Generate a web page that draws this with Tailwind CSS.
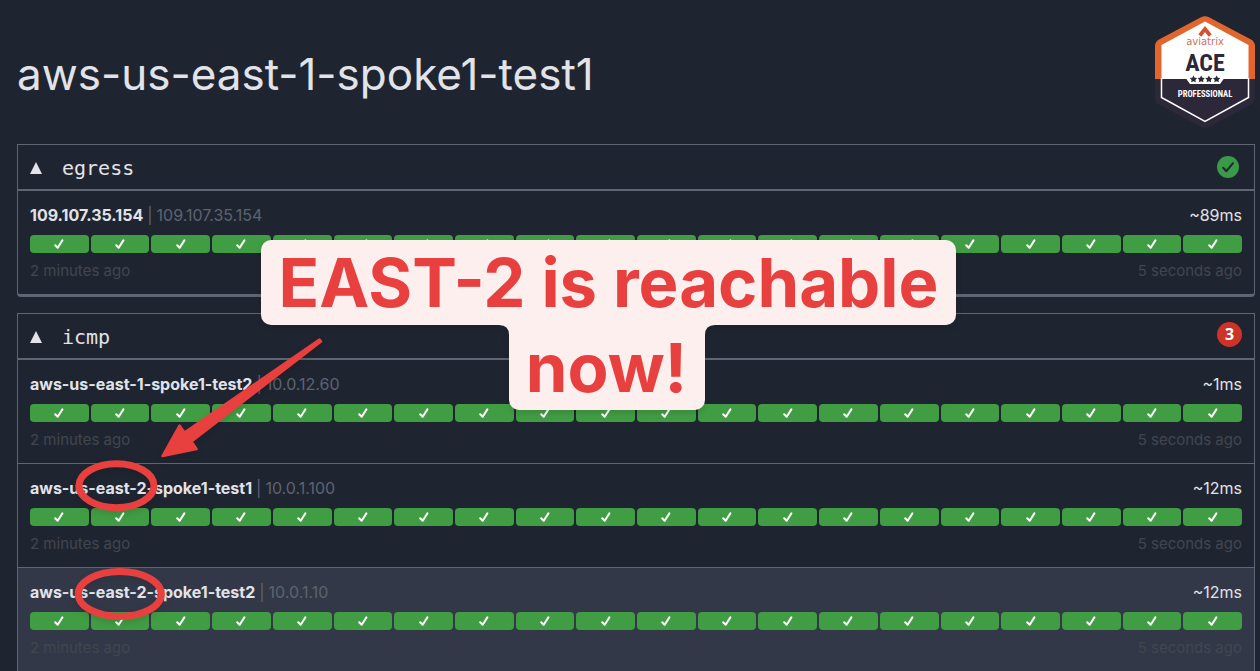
<!DOCTYPE html>
<html lang="en">
<head>
<meta charset="utf-8">
<meta name="viewport" content="width=device-width, initial-scale=1">
<title>aws-us-east-1-spoke1-test1</title>
<script src="https://cdn.jsdelivr.net/npm/@tailwindcss/browser@4"></script>
</head>
<body class="bg-[#1f2530] font-['Inter',sans-serif] text-base text-[#e2e3e9]">
<svg class="hidden" aria-hidden="true">
  <symbol id="tick" viewBox="0 0 12 12"><path d="M2.2 7.200 4.700 9.800 9.400 2.400" fill="none" stroke="#fff" stroke-width="2" stroke-linecap="round" stroke-linejoin="round"/></symbol>
</svg>
<main class="relative overflow-hidden pr-[5px] pl-[17px]">
  <header class="flex h-36 items-center justify-between">
    <h1 class="pt-1 text-[44px] leading-12">aws-us-east-1-spoke1-test1</h1>
    <svg class="h-[114px] w-[100px]" viewBox="0 0 100 114" role="img" aria-label="Aviatrix ACE Professional">
      <defs>
        <clipPath id="upper"><rect width="100" height="64"/></clipPath>
        <clipPath id="lower"><rect y="64" width="100" height="50"/></clipPath>
        <path id="hex" d="M46 2.3Q50 0 54 2.3L96 24.500Q100 27 100 31V83Q100 87 96 89.500L54 111.700Q50 114 46 111.700L4 89.500Q0 87 0 83V31Q0 27 4 24.500Z"/>
      </defs>
      <use href="#hex" fill="#e2652e" clip-path="url(#upper)"/>
      <use href="#hex" fill="#2c2839" clip-path="url(#lower)"/>
      <path d="M50 6.500 93.500 30V83L50 107.500 6.500 83V30Z" fill="#fff" clip-path="url(#upper)"/>
      <path d="M6.500 63V82.500L50 106.500 93.500 82.500V63" fill="none" stroke="#fff" stroke-width="1.500"/>
      <path d="M31 63.500 35 69H65L69 63.500Z" fill="#fff"/>
      <path d="M44.800 20.500 50 14 55.200 20.500" fill="none" stroke="#d8502d" stroke-width="3.800"/>
      <text x="50" y="30" text-anchor="middle" font-family="DejaVu Sans" font-size="10" fill="#d2705a">aviatrix</text>
      <text x="50" y="56" text-anchor="middle" font-family="Roboto Condensed, Liberation Sans Narrow, Open Sans Condensed, Roboto" font-weight="700" font-size="24" fill="#2c2839">ACE</text>
      <g fill="#2c2839">
        <path id="star" d="M38.500 60.500l1.200 2.200 2.400.4-1.700 1.800.4 2.400-2.300-1.100-2.300 1.100.4-2.400-1.700-1.800 2.400-.4z"/>
        <use href="#star" x="7.700"/><use href="#star" x="15.400"/><use href="#star" x="23.100"/>
      </g>
      <text x="50" y="81.500" text-anchor="middle" font-family="Roboto Condensed, Liberation Sans Narrow, Open Sans Condensed, Roboto" font-weight="700" font-size="8.600" fill="#fff">PROFESSIONAL</text>
    </svg>
  </header>

  <section class="rounded-b border border-b-[3px] border-[#5f6572]">
    <div class="flex h-[46px] items-center justify-between border-b-2 border-[#5f6572] pr-3.5 pl-3">
      <h2 class="pt-0.5 text-xl"><button type="button" aria-expanded="true" class="flex items-center gap-5 font-['DejaVu_Sans_Mono',monospace]"><svg class="size-3" viewBox="0 0 12 12" aria-hidden="true"><path d="M6 0 12 12H0Z" fill="currentColor"/></svg>egress</button></h2>
      <svg class="size-6" viewBox="0 0 24 24" role="img" aria-label="All checks passing"><circle cx="12" cy="12" r="11" fill="#3a9a48"/><path d="M7.200 12.800 10.400 16.200 17 8.200" fill="none" stroke="#1f2530" stroke-width="2" stroke-linecap="round" stroke-linejoin="round"/></svg>
    </div>
    <ul><li data-name="109.107.35.154" data-address="109.107.35.154" data-latency="~89ms"></li></ul>
  </section>

  <section class="mt-4 border border-b-0 border-[#5f6572]">
    <div class="flex h-[46px] items-center justify-between border-b-2 border-[#5f6572] px-3">
      <h2 class="pt-0.5 text-xl"><button type="button" aria-expanded="true" class="flex items-center gap-5 font-['DejaVu_Sans_Mono',monospace]"><svg class="size-3" viewBox="0 0 12 12" aria-hidden="true"><path d="M6 0 12 12H0Z" fill="currentColor"/></svg>icmp</button></h2>
      <span class="mb-1 flex size-[25px] items-center justify-center rounded-full bg-[#cb3427] font-['Noto_Sans',sans-serif] text-base font-bold text-white">3</span>
    </div>
    <ul class="divide-y divide-[#5f6572]">
      <li data-name="aws-us-east-1-spoke1-test2" data-address="10.0.12.60" data-latency="~1ms"></li>
      <li data-name="aws-us-east-2-spoke1-test1" data-address="10.0.1.100" data-latency="~12ms"></li>
      <li class="bg-[#333848]" data-name="aws-us-east-2-spoke1-test2" data-address="10.0.1.10" data-latency="~12ms"></li>
    </ul>
  </section>

  <svg class="absolute top-0 left-0 h-[671px] w-[340px] drop-shadow-md" viewBox="0 0 340 671" aria-hidden="true">
    <path d="M319.500 339.500 184.500 432.500 179.500 425.500 162.500 456 196.500 449 191.500 441.500 321 341.500Z" fill="#e8403f" stroke="#e8403f" stroke-width="2.500" stroke-linejoin="round"/>
    <ellipse cx="116.500" cy="485.700" rx="37.500" ry="22" fill="none" stroke="#e8403f" stroke-width="7"/>
    <ellipse cx="119.800" cy="594" rx="41.500" ry="22.500" fill="none" stroke="#e8403f" stroke-width="7"/>
  </svg>

  <p class="absolute top-60 left-[261px] flex w-[695px] flex-col items-center text-center text-[67px] leading-[85px] font-bold text-[#e8403f] drop-shadow-md">
    <span class="w-full rounded-[10px] bg-[#fcefee] whitespace-nowrap">EAST-2 is reachable</span>
    <span class="relative mr-1 w-49 rounded-b-[10px] bg-[#fcefee]">now!
      <svg class="absolute top-0 -left-2.5 size-2.5" viewBox="0 0 10 10" aria-hidden="true"><path d="M0 0H10V10Q10 0 0 0Z" fill="#fcefee"/></svg>
      <svg class="absolute top-0 -right-2.5 size-2.5" viewBox="0 0 10 10" aria-hidden="true"><path d="M10 0H0V10Q0 0 10 0Z" fill="#fcefee"/></svg>
    </span>
  </p>
</main>

<template id="probe">
  <div class="px-3 pt-3 pb-[11px]">
    <div class="flex justify-between">
      <div class="flex gap-1 text-[#5d6370]"><strong class="font-bold text-[#e2e3e9]"></strong><span>|</span><span data-part="address"></span></div>
      <span data-part="latency"></span>
    </div>
    <ol class="mt-2 grid grid-cols-20 gap-0.5"></ol>
    <div class="mt-1.5 flex justify-between text-[15px] leading-6 text-[#414651]"><span>2 minutes ago</span><span>5 seconds ago</span></div>
  </div>
</template>
<script>
  for (const row of document.querySelectorAll('li[data-name]')) {
    const view = document.getElementById('probe').content.cloneNode(true);
    view.querySelector('strong').textContent = row.dataset.name;
    view.querySelector('[data-part=address]').textContent = row.dataset.address;
    view.querySelector('[data-part=latency]').textContent = row.dataset.latency;
    view.querySelector('ol').innerHTML = '<li class="flex h-[18px] items-center justify-center rounded bg-[#419d44]"><svg class="size-3" role="img" aria-label="OK"><use href="#tick"/></svg></li>'.repeat(20);
    row.append(view);
  }
</script>
</body>
</html>
